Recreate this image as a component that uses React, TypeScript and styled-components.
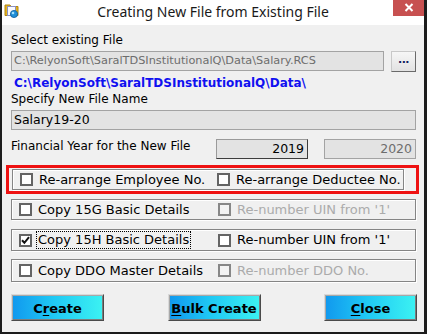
import React from "react";
import styled, { createGlobalStyle } from "styled-components";

const Global = createGlobalStyle`
  html, body { margin: 0; padding: 0; background: #f0f0f0; }
  * { box-sizing: border-box; }
`;

const Window = styled.div`
  width: 427px;
  height: 334px;
  background: #f0f0f0;
  border-left: 2px solid #1c1c1c;
  border-right: 3px solid #1c1c1c;
  border-bottom: 2px solid #1c1c1c;
  display: flex;
  flex-direction: column;
  font-family: "DejaVu Sans", Verdana, sans-serif;
  font-size: 12px;
  color: #000;
  overflow: hidden;
`;

const TitleBar = styled.div`
  height: 25px;
  flex: none;
  background: #fff;
  display: grid;
  grid-template-columns: 1fr auto 1fr;
  align-items: start;
`;

const TitleIcon = styled.div`
  padding: 3px 0 0 2px;
  display: flex;
`;

const TitleText = styled.div`
  font-family: "Noto Sans", "Open Sans", sans-serif;
  font-size: 14px;
  line-height: 19px;
  padding-top: 2px;
  color: #1a1a1a;
  white-space: nowrap;
`;

const CloseBox = styled.div`
  justify-self: end;
  width: 31px;
  height: 16px;
  background: #c75050;
  display: flex;
  align-items: flex-start;
  justify-content: center;
  padding-top: 3px;
`;

const Body = styled.div`
  flex: 1;
  padding: 8px 8px 0 9px;
  display: flex;
  flex-direction: column;
`;

const Label = styled.div<{ $mt?: number }>`
  line-height: 15px;
  height: 15px;
  margin-top: ${(p) => p.$mt ?? 0}px;
  white-space: nowrap;
`;

const PathText = styled.div`
  margin-top: 4px;
  line-height: 15px;
  height: 15px;
  font-weight: bold;
  font-size: 12px;
  color: #1010f0;
  padding-left: 3px;
  white-space: nowrap;
`;

const Row = styled.div<{ $mt?: number; $gap?: number }>`
  display: flex;
  align-items: flex-start;
  gap: ${(p) => p.$gap ?? 0}px;
  margin-top: ${(p) => p.$mt ?? 0}px;
`;

const TextBox = styled.div<{
  $disabled?: boolean;
  $w?: number;
  $right?: boolean;
  $sunken?: boolean;
  $size?: number;
}>`
  height: 20px;
  ${(p) => (p.$w ? `width: ${p.$w}px; flex: none;` : "flex: 1;")}
  background: #e3e3e3;
  border: 1px solid #a3a3a3;
  ${(p) => (p.$sunken ? "border-color: #9a9a9a #3c3c3c #3c3c3c #9a9a9a;" : "")}
  color: ${(p) => (p.$disabled ? "#6d6d6d" : "#000")};
  font-size: ${(p) => p.$size ?? 12.5}px;
  line-height: 18px;
  padding: 0 3px 0 2px;
  text-align: ${(p) => (p.$right ? "right" : "left")};
  white-space: nowrap;
  overflow: hidden;
`;

const BrowseButton = styled.div`
  width: 25px;
  height: 21px;
  flex: none;
  margin-left: 7px;
  background: linear-gradient(#f6f6f6, #e2e2e2);
  border: 1px solid;
  border-color: #c8c8c8 #6a6a6a #6a6a6a #c8c8c8;
  font-weight: bold;
  font-size: 11px;
  color: #102060;
  text-align: center;
  line-height: 16px;
  letter-spacing: -0.5px;
`;

const FYLabel = styled.div`
  flex: 1;
  line-height: 15px;
  white-space: nowrap;
`;

const Highlight = styled.div`
  margin: 6px -3px 0 -5px;
  height: 29px;
  border: 3px solid #ee1111;
  padding: 1px 0 1px 3px;
  display: flex;
  & > * { flex: 1; }
`;

const Group = styled.div<{ $mt?: number; $h?: number; $col?: number }>`
  height: ${(p) => p.$h ?? 22}px;
  flex: none;
  margin-top: ${(p) => p.$mt ?? 0}px;
  border: 1px solid #858585;
  box-shadow: inset 1px 1px 0 #ffffff, 1px 1px 0 #ffffff;
  display: grid;
  grid-template-columns: ${(p) => p.$col ?? 199}px 1fr;
  align-items: center;
  padding-left: 7px;
  font-size: 13px;
`;

const Check = styled.label<{ $disabled?: boolean }>`
  display: flex;
  align-items: center;
  gap: 6px;
  color: ${(p) => (p.$disabled ? "#ababab" : "#000")};
  white-space: nowrap;
  line-height: 16px;
`;

const Box = styled.span<{ $disabled?: boolean }>`
  width: 13px;
  height: 13px;
  flex: none;
  border: 2px solid ${(p) => (p.$disabled ? "#878787" : "#646464")};
  background: ${(p) => (p.$disabled ? "#f3f3f3" : "#ffffff")};
  display: flex;
  align-items: center;
  justify-content: center;
`;

const CheckText = styled.span<{ $focus?: boolean }>`
  padding: 0 1px;
  border: 1px dotted ${(p) => (p.$focus ? "#000" : "transparent")};
  margin-left: -2px;
`;

const ButtonRow = styled.div`
  margin-top: 12px;
  display: flex;
  justify-content: space-between;
  margin-right: -1px;
`;

const ActionButton = styled.div`
  width: 93px;
  height: 27px;
  border: 1px solid;
  border-color: #d9d9d9 #4a4a4a #4a4a4a #d9d9d9;
  box-shadow: inset 1px 1px 0 #a8a8a8, inset -1px -1px 0 #7c7c7c;
  background: linear-gradient(90deg, #1198ee 0%, #1fc8f4 45%, #3cf2f2 100%);
  font-weight: bold;
  font-size: 13px;
  color: #000;
  display: flex;
  align-items: center;
  justify-content: center;
  padding-top: 2px;
  u { text-decoration-thickness: 1px; text-underline-offset: 2px; }
`;

const FolderIcon = () => (
  <svg width="16" height="15" viewBox="0 0 16 15">
    <path d="M1 2h5l1 1.5h7v9H1z" fill="#e6b520" stroke="#b08410" strokeWidth="1" />
    <rect x="3.5" y="3.5" width="8" height="9" fill="#fafaff" stroke="#8a90c0" strokeWidth="1" />
    <circle cx="10" cy="11" r="3.6" fill="#1f8fd8" stroke="#0d5a98" strokeWidth="0.8" />
    <circle cx="9" cy="10" r="1.3" fill="#9fe0ff" />
  </svg>
);

const CloseX = () => (
  <svg width="10" height="9" viewBox="0 0 10 9">
    <path d="M1.5 1l7 7M8.5 1l-7 7" stroke="#fff" strokeWidth="2" />
  </svg>
);

const Tick = () => (
  <svg width="9" height="9" viewBox="0 0 9 9">
    <path d="M1 4.2l2.4 2.6L8 1.2" stroke="#111" strokeWidth="2" fill="none" />
  </svg>
);

type CbProps = { label: string; checked?: boolean; disabled?: boolean; focus?: boolean };
const CheckItem = ({ label, checked, disabled, focus }: CbProps) => (
  <Check $disabled={disabled}>
    <Box $disabled={disabled}>{checked ? <Tick /> : null}</Box>
    <CheckText $focus={focus}>{label}</CheckText>
  </Check>
);

export default function App() {
  return (
    <>
      <Global />
      <Window>
        <TitleBar>
          <TitleIcon>
            <FolderIcon />
          </TitleIcon>
          <TitleText>Creating New File from Existing File</TitleText>
          <CloseBox>
            <CloseX />
          </CloseBox>
        </TitleBar>
        <Body>
          <Label>Select existing File</Label>
          <Row $mt={3}>
            <TextBox $disabled $size={11.3}>
              C:\RelyonSoft\SaralTDSInstitutionalQ\Data\Salary.RCS
            </TextBox>
            <BrowseButton>...</BrowseButton>
          </Row>
          <PathText>C:\RelyonSoft\SaralTDSInstitutionalQ\Data\</PathText>
          <Label $mt={1}>Specify New File Name</Label>
          <Row $mt={3}>
            <TextBox>Salary19-20</TextBox>
          </Row>
          <Row $mt={9} $gap={16}>
            <FYLabel>Financial Year for the New File</FYLabel>
            <TextBox $w={92} $right $sunken>2019</TextBox>
            <TextBox $w={92} $right $disabled>2020</TextBox>
          </Row>
          <Highlight>
            <Group $col={197} $h={21}>
              <CheckItem label="Re-arrange Employee No." />
              <CheckItem label="Re-arrange Deductee No." />
            </Group>
          </Highlight>
          <Group $mt={5} $h={21}>
            <CheckItem label="Copy 15G Basic Details" />
            <CheckItem label="Re-number UIN from '1'" disabled />
          </Group>
          <Group $mt={9}>
            <CheckItem label="Copy 15H Basic Details" checked focus />
            <CheckItem label="Re-number UIN from '1'" />
          </Group>
          <Group $mt={8} $h={23}>
            <CheckItem label="Copy DDO Master Details" />
            <CheckItem label="Re-number DDO No." disabled />
          </Group>
          <ButtonRow>
            <ActionButton>
              <span>
                C<u>r</u>eate
              </span>
            </ActionButton>
            <ActionButton>
              <span>
                <u>B</u>ulk Create
              </span>
            </ActionButton>
            <ActionButton>
              <span>
                <u>C</u>lose
              </span>
            </ActionButton>
          </ButtonRow>
        </Body>
      </Window>
    </>
  );
}
